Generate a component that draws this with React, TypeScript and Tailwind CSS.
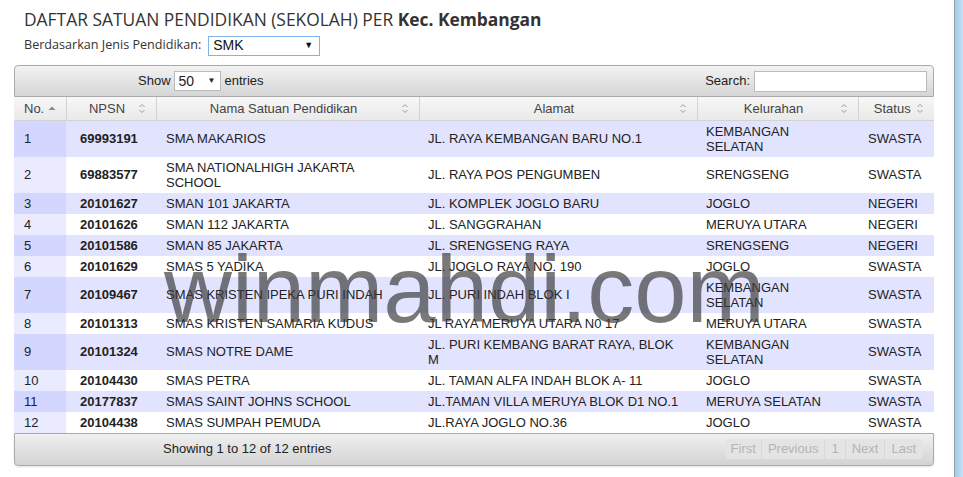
import React from "react";

const rows = [
    ["1", "69993191", "SMA MAKARIOS", "JL. RAYA KEMBANGAN BARU NO.1", "KEMBANGAN SELATAN", "SWASTA"],
    ["2", "69883577", "SMA NATIONALHIGH JAKARTA SCHOOL", "JL. RAYA POS PENGUMBEN", "SRENGSENG", "SWASTA"],
    ["3", "20101627", "SMAN 101 JAKARTA", "JL. KOMPLEK JOGLO BARU", "JOGLO", "NEGERI"],
    ["4", "20101626", "SMAN 112 JAKARTA", "JL. SANGGRAHAN", "MERUYA UTARA", "NEGERI"],
    ["5", "20101586", "SMAN 85 JAKARTA", "JL. SRENGSENG RAYA", "SRENGSENG", "NEGERI"],
    ["6", "20101629", "SMAS 5 YADIKA", "JL. JOGLO RAYA NO. 190", "JOGLO", "SWASTA"],
    ["7", "20109467", "SMAS KRISTEN IPEKA PURI INDAH", "JL. PURI INDAH BLOK I", "KEMBANGAN SELATAN", "SWASTA"],
    ["8", "20101313", "SMAS KRISTEN SAMARIA KUDUS", "JL RAYA MERUYA UTARA N0 17", "MERUYA UTARA", "SWASTA"],
    ["9", "20101324", "SMAS NOTRE DAME", "JL. PURI KEMBANG BARAT RAYA, BLOK M", "KEMBANGAN SELATAN", "SWASTA"],
    ["10", "20104430", "SMAS PETRA", "JL. TAMAN ALFA INDAH BLOK A- 11", "JOGLO", "SWASTA"],
    ["11", "20177837", "SMAS SAINT JOHNS SCHOOL", "JL.TAMAN VILLA MERUYA BLOK D1 NO.1", "MERUYA SELATAN", "SWASTA"],
    ["12", "20104438", "SMAS SUMPAH PEMUDA", "JL.RAYA JOGLO NO.36", "JOGLO", "SWASTA"],
];

function SortIcon() {
    return (
        <svg width="8" height="11" viewBox="0 0 8 11" className="shrink-0">
            <polyline points="1.5,4 4,1.5 6.5,4" fill="none" stroke="#9a9a9a" strokeWidth="1" />
            <polyline points="1.5,7 4,9.5 6.5,7" fill="none" stroke="#9a9a9a" strokeWidth="1" />
        </svg>
    );
}

function SortedIcon() {
    return (
        <svg width="8" height="6" viewBox="0 0 8 6" className="shrink-0">
            <polygon points="0.5,5 4,1.5 7.5,5" fill="#8a8a8a" />
        </svg>
    );
}

function Th({ label, left }: { label: string; left?: boolean }) {
    return (
        <th className="h-[23px] border-r border-[#d3d3d3] last:border-r-0 bg-gradient-to-b from-[#f7f7f7] to-[#e9e9e9] font-normal text-[13px] text-[#444] px-[10px]">
            <div className="flex items-center">
                <span className={cn("flex-1", left ? "text-left" : "text-center")}>{label}</span>
                {left ? <SortedIcon /> : <SortIcon />}
            </div>
        </th>
    );
}

export default function App() {
    return (
        <div className="h-[477px] w-[963px] flex bg-white overflow-hidden" style={{ fontFamily: '"Liberation Sans", Arial, sans-serif' }}>
            <div className="flex-1 relative pl-[14px]">
                <h1 className="pl-[10px] pt-[7px] text-[17.4px] leading-[24px] text-[#333] font-normal" style={{ fontFamily: '"Open Sans", sans-serif' }}>
                    DAFTAR SATUAN PENDIDIKAN (SEKOLAH) PER <b className="font-bold">Kec. Kembangan</b>
                </h1>
                <div className="flex items-center pl-[10px] mt-[5px] h-[19px]">
                    <span className="text-[12.6px] text-[#333]" style={{ fontFamily: '"Open Sans", sans-serif' }}>Berdasarkan Jenis Pendidikan:</span>
                    <div className="ml-[7px] w-[112px] h-[20px] border border-[#7eb4ea] bg-white flex items-center justify-between px-[4px] text-[14px] text-[#111]">
                        <span>SMK</span>
                        <span className="text-[9px] mr-[2px]">▼</span>
                    </div>
                </div>

                <div className="mt-[10px] w-[920px]">
                    <div className="h-[32px] border border-[#aaa] rounded-t-[4px] bg-gradient-to-b from-[#f3f3f3] to-[#d5d5d5] flex items-center justify-between text-[13px] text-[#222]">
                        <div className="flex items-center pl-[123px]">
                            <span>Show</span>
                            <div className="ml-[3px] w-[47px] h-[20px] border border-[#bbb] bg-white flex items-center justify-between px-[4px] text-[14px]">
                                <span>50</span>
                                <span className="text-[8px]">▼</span>
                            </div>
                            <span className="ml-[4px]">entries</span>
                        </div>
                        <div className="flex items-center pr-[6px]">
                            <span>Search:</span>
                            <div className="ml-[4px] w-[173px] h-[21px] border border-[#bbb] bg-white"></div>
                        </div>
                    </div>

                    <table className="table-fixed border-collapse w-[920px] text-[13px] text-[#222]">
                        <colgroup>
                            <col className="w-[52px]" />
                            <col className="w-[90px]" />
                            <col className="w-[263px]" />
                            <col className="w-[278px]" />
                            <col className="w-[161px]" />
                            <col className="w-[76px]" />
                        </colgroup>
                        <thead>
                            <tr className="border-b border-[#d3d3d3]">
                                <Th label="No." left />
                                <Th label="NPSN" />
                                <Th label="Nama Satuan Pendidikan" />
                                <Th label="Alamat" />
                                <Th label="Kelurahan" />
                                <Th label="Status" />
                            </tr>
                        </thead>
                        <tbody>
                            {rows.map((r, i) => {
                                const odd = i % 2 === 0;
                                return (
                                    <tr key={r[0]} className={odd ? "bg-[#e2e4ff]" : "bg-white"}>
                                        <td className={cn("px-[10px] py-[3px] leading-[15px] align-middle", odd ? "bg-[#d3d6ff]" : "bg-[#eaebff]")}>{r[0]}</td>
                                        <td className="pl-[14px] pr-[4px] py-[3px] leading-[15px] font-bold">{r[1]}</td>
                                        <td className="px-[10px] py-[3px] leading-[15px]">{r[2]}</td>
                                        <td className="pl-[9px] pr-[10px] py-[3px] leading-[15px]">{r[3]}</td>
                                        <td className="pl-[9px] pr-[10px] py-[3px] leading-[15px]">{r[4]}</td>
                                        <td className="px-[10px] py-[3px] leading-[15px]">{r[5]}</td>
                                    </tr>
                                );
                            })}
                        </tbody>
                    </table>

                    <div className="h-[33px] border border-[#aaa] rounded-b-[4px] bg-gradient-to-b from-[#f0f0f0] to-[#d3d3d3] flex items-center justify-between text-[13px] text-[#222] shadow-[0_1px_2px_rgba(0,0,0,0.12)]">
                        <span className="pl-[148px]">Showing 1 to 12 of 12 entries</span>
                        <div className="mr-[11px] flex items-center h-[20px] bg-[#e4e4e4] rounded-[2px] text-[#b4b4b4] text-[13px]">
                            <span className="px-[5px] border-r border-[#d8d8d8]">First</span>
                            <span className="px-[6px] border-r border-[#d8d8d8]">Previous</span>
                            <span className="px-[6px] border-r border-[#d8d8d8]">1</span>
                            <span className="px-[6px] border-r border-[#d8d8d8]">Next</span>
                            <span className="px-[6px]">Last</span>
                        </div>
                    </div>
                </div>

                {/* watermark over the table */}
                <div className="absolute left-[164px] top-[234px] text-[94px] leading-[112px] text-[#3a3a3a] opacity-[0.68] pointer-events-none whitespace-nowrap">
                    winmahdi.com
                </div>
            </div>
            <div className="w-[9px] h-full border-l border-[#8ea4b4] bg-gradient-to-r from-[#a3cbe6] to-[#c3e2f6]"></div>
        </div>
    );
}

function cn(...classes: any[]) {
    return classes.filter(Boolean).join(" ");
}
